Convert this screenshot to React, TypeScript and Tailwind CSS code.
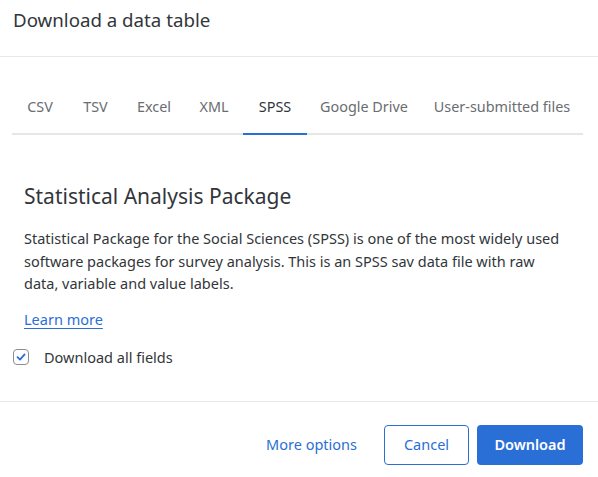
import React from 'react';

// tab widths measured so each label sits centred where the reference has it
const tabs: { label: string; w: string }[] = [
  { label: 'CSV', w: 'w-[56px]' },
  { label: 'TSV', w: 'w-[55px]' },
  { label: 'Excel', w: 'w-[62px]' },
  { label: 'XML', w: 'w-[58px]' },
  { label: 'SPSS', w: 'w-[64px]' },
  { label: 'Google Drive', w: 'w-[114px]' },
  { label: 'User-submitted files', w: 'w-[162px]' },
];

export default function App() {
  const active = 'SPSS';

  return (
    <div className="w-[598px] h-[477px] bg-white text-[#32363a] font-['Noto_Sans',sans-serif] flex flex-col overflow-hidden">
      {/* Header */}
      <div className="h-[57px] border-b border-[#e8e8e8] pl-[13px] pt-[7px]">
        <h1 className="text-[18.7px] leading-[26px] text-[#32363a]">Download a data table</h1>
      </div>

      {/* Tabs */}
      <div className="ml-[12px] mr-[15px] mt-[30px] flex border-b-2 border-[#e6e6e6]">
        {tabs.map(t => (
          <div
            key={t.label}
            className={
              t.w +
              ' shrink-0 whitespace-nowrap text-center h-[48px] pt-[9px] text-[14.4px] leading-[22px] -mb-[2px] border-b-2 ' +
              (t.label === active ? 'border-[#2a6fd6] text-[#32363a]' : 'border-transparent text-[#6a6d70]')
            }
          >
            {t.label}
          </div>
        ))}
      </div>

      {/* Body */}
      <div className="px-[24px] pr-[30px] pt-[46px]">
        <h2 className="text-[21px] leading-[30px] text-[#32363a]">Statistical Analysis Package</h2>
        <p className="mt-[16px] text-[14.5px] leading-[22.5px] text-[#32363a]">
          Statistical Package for the Social Sciences (SPSS) is one of the most widely used software packages for survey analysis. This is an SPSS sav data file with raw data, variable and value labels.
        </p>
        <a className="inline-block mt-[13px] text-[14.5px] leading-[22px] text-[#2a6fd6] underline underline-offset-[3px]">Learn more</a>
      </div>
      <label className="ml-[13px] mt-[16px] flex items-center gap-[15px] text-[14.5px] text-[#32363a]">
        <span className="w-[16px] h-[16px] rounded-[4px] border border-[#8a8d90] flex items-center justify-center">
          <svg width="10" height="10" viewBox="0 0 10 10" fill="none">
            <path d="M1.5 5.2 L4 7.6 L8.6 2.4" stroke="#2a6fd6" strokeWidth="1.8" strokeLinecap="round" strokeLinejoin="round" />
          </svg>
        </span>
        Download all fields
      </label>

      {/* Footer */}
      <div className="mt-[33px] border-t border-[#e8e8e8] flex items-center justify-end gap-[8px] pr-[15px] pt-[23px]">
        <button className="h-[40px] px-[12px] text-[14.5px] text-[#2a6fd6] mr-[7px]">More options</button>
        <button className="h-[40px] w-[85px] rounded-[4px] border border-[#2a6fd6] text-[14.5px] text-[#2a6fd6] bg-white">Cancel</button>
        <button className="h-[40px] w-[106px] rounded-[4px] bg-[#2a6fd6] text-[14.5px] font-semibold text-white">Download</button>
      </div>
    </div>
  );
}
